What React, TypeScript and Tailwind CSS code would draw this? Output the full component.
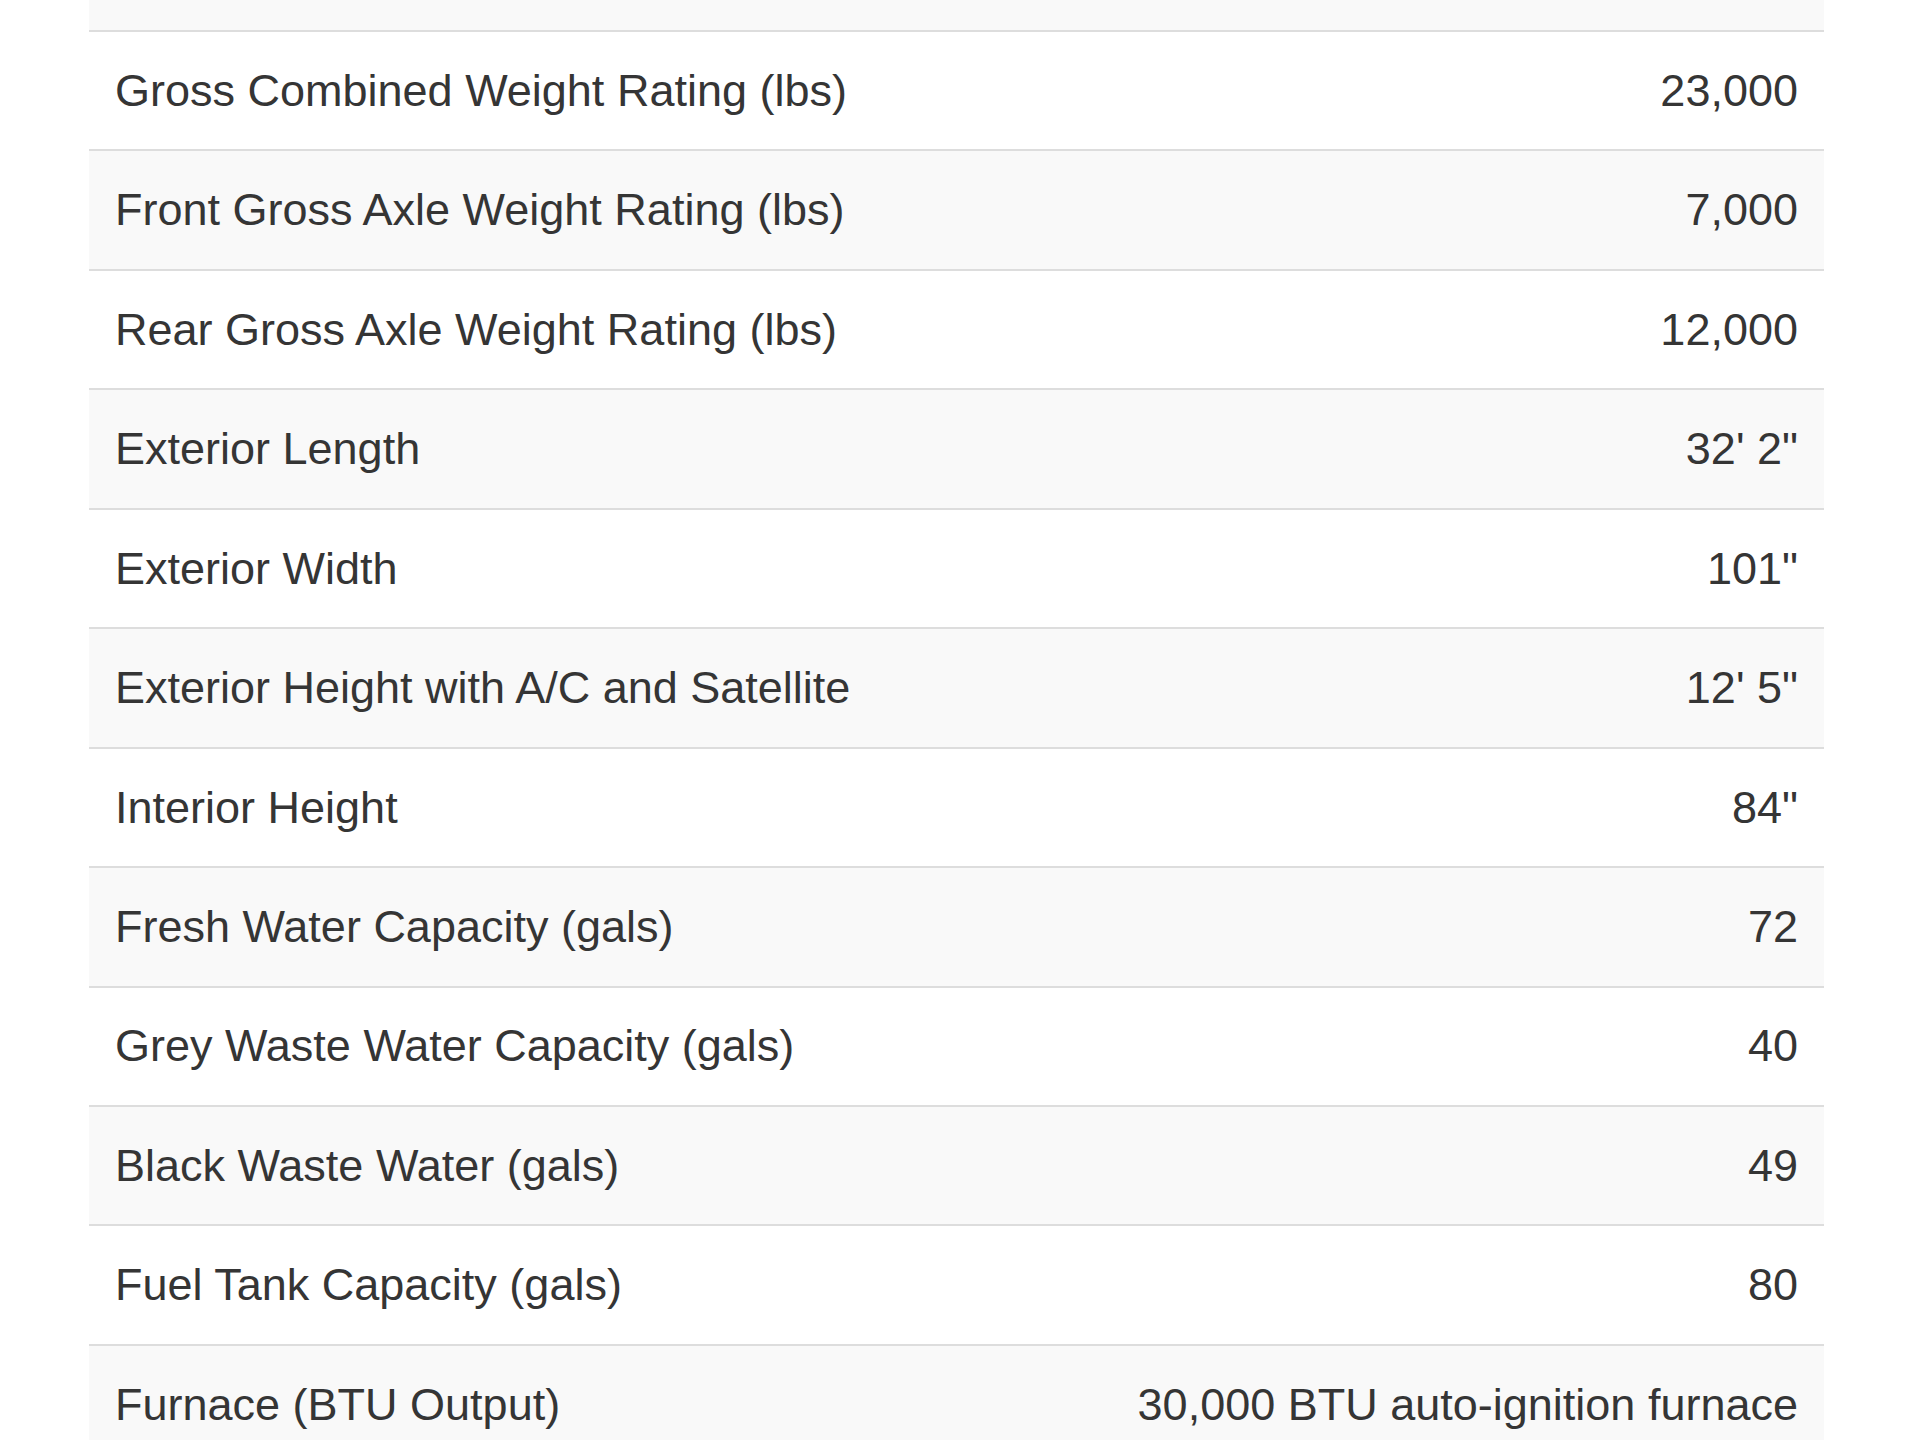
import React from "react";

const rows: [string, string][] = [
  ["Gross Combined Weight Rating (lbs)", "23,000"],
  ["Front Gross Axle Weight Rating (lbs)", "7,000"],
  ["Rear Gross Axle Weight Rating (lbs)", "12,000"],
  ["Exterior Length", "32' 2\""],
  ["Exterior Width", "101\""],
  ["Exterior Height with A/C and Satellite", "12' 5\""],
  ["Interior Height", "84\""],
  ["Fresh Water Capacity (gals)", "72"],
  ["Grey Waste Water Capacity (gals)", "40"],
  ["Black Waste Water (gals)", "49"],
  ["Fuel Tank Capacity (gals)", "80"],
  ["Furnace (BTU Output)", "30,000 BTU auto-ignition furnace"],
];

export default function App() {
  return (
    <div
      className="h-[1440px] w-[1920px] overflow-hidden bg-white"
      style={{ fontFamily: '"Liberation Sans", Arial, Helvetica, sans-serif' }}
    >
      <div className="ml-[89px] w-[1735px] text-[45px] text-[#353535]">
        <div className="h-[30px] bg-[#f9f9f9]" />
        {rows.map(([label, value], i) => (
          <div
            key={label}
            className={
              i % 2 === 0
                ? "flex h-[119.45px] items-center justify-between border-t-2 border-[#dddddd] bg-white px-[26px]"
                : "flex h-[119.45px] items-center justify-between border-t-2 border-[#dddddd] bg-[#f9f9f9] px-[26px]"
            }
          >
            <span>{label}</span>
            <span>{value}</span>
          </div>
        ))}
      </div>
    </div>
  );
}
